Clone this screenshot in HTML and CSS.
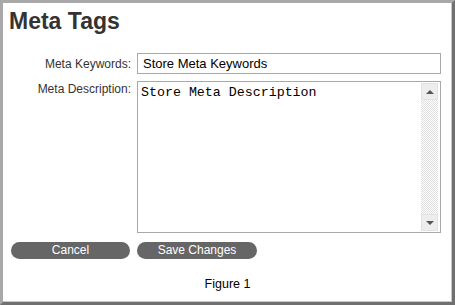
FILE: index.html
```html
<!DOCTYPE html>
<html>
<head>
	<title>Meta Tags</title>
	<link rel="stylesheet" href="styles.css">
</head>
<body>

	<div class="frame">
		<h2>Meta Tags</h2>
		<form class="meta-form">
			<label for="meta_keywords">Meta Keywords:</label>
			<input type="text" id="meta_keywords" name="meta_keywords" value="Store Meta Keywords">

			<label for="meta_description">Meta Description:</label>
			<div class="textbox">
				<textarea id="meta_description" name="meta_description">Store Meta Description</textarea>
				<div class="scrollbar">
					<span class="arrow up"></span>
					<span class="track"></span>
					<span class="arrow down"></span>
				</div>
			</div>

			<button type="button" class="btn cancel">Cancel</button>
			<button type="button" class="btn">Save Changes</button>
		</form>
		<p class="caption">Figure 1</p>
	</div>

</body>
</html>
```

FILE: styles.css
```css
html, body {
	margin: 0;
	padding: 0;
	background: #FFFFFF;
}

.frame {
	box-sizing: border-box;
	width: 455px;
	height: 305px;
	border-style: solid;
	border-width: 3px;
	border-color: #A8A8A8 #707070 #707070 #A8A8A8;
	box-shadow: inset -1px -1px 0 #C8C8C8;
	padding: 0 8px;
	font-family: "Liberation Sans", Arial, sans-serif;
}

h2 {
	color: #333333;
	font-size: 23px;
	font-weight: bold;
	margin: 3px 0 0 -2px;
	line-height: 30px;
}

.meta-form {
	display: grid;
	grid-template-columns: 120px 304px;
	column-gap: 6px;
	row-gap: 7px;
	margin-top: 17px;
}

label {
	color: #333333;
	font-size: 12px;
	text-align: right;
	line-height: 14px;
}

label[for="meta_keywords"] {
	align-self: center;
}

label[for="meta_description"] {
	padding-top: 1px;
}

input[type="text"] {
	box-sizing: border-box;
	height: 21px;
	width: 304px;
	border: 1px solid #A9A9A9;
	padding: 0 5px;
	font-family: "Liberation Sans", Arial, sans-serif;
	font-size: 13px;
	color: #000000;
	margin: 0;
}

.textbox {
	box-sizing: border-box;
	height: 152px;
	border: 1px solid #A9A9A9;
	display: flex;
	padding: 1px 2px 1px 0;
}

textarea {
	flex: 1;
	border: none;
	resize: none;
	outline: none;
	padding: 2px 3px;
	margin: 0;
	font-family: "Liberation Mono", "Courier New", monospace;
	font-size: 13.3px;
	color: #000000;
}

.scrollbar {
	width: 17px;
	display: flex;
	flex-direction: column;
}

.track {
	flex: 1;
	background: repeating-conic-gradient(#DEDEDE 0 25%, #FFFFFF 0 50%) 0 0 / 2px 2px;
}

.arrow {
	height: 17px;
	background: #EDEDED;
	border: 1px solid #E2E2E2;
	box-sizing: border-box;
	position: relative;
}

.arrow::after {
	content: "";
	position: absolute;
	left: 4px;
	top: 6px;
	border-left: 4px solid transparent;
	border-right: 4px solid transparent;
}

.arrow.up::after {
	border-bottom: 4px solid #555555;
}

.arrow.down::after {
	border-top: 4px solid #555555;
}

.btn {
	height: 17px;
	width: 120px;
	border: none;
	border-radius: 9px;
	background-color: #666666;
	color: #FFFFFF;
	font-family: "Liberation Sans", Arial, sans-serif;
	font-size: 12px;
	padding: 0;
	margin-top: 2px;
	line-height: 17px;
}

.cancel {
	width: 119px;
}

.caption {
	text-align: center;
	font-size: 12.5px;
	color: #000000;
	margin: 18px 0 0 0;
}
```
